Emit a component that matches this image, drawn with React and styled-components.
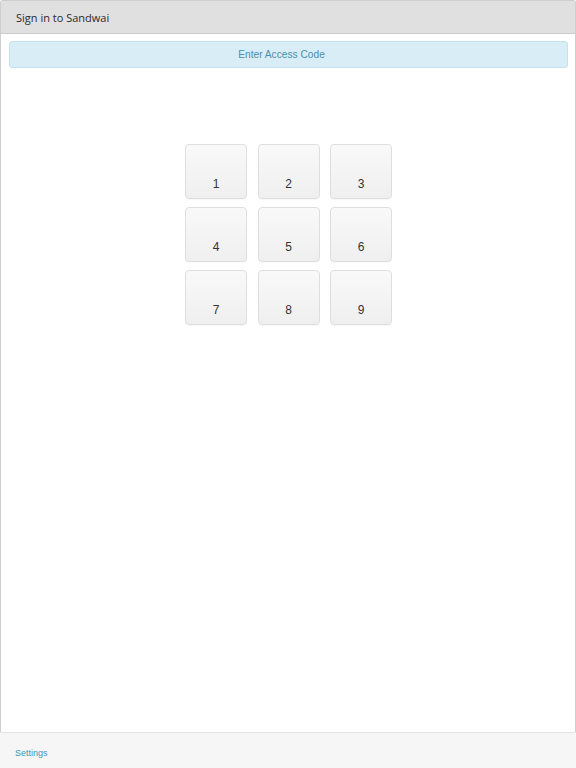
import React from "react";
import styled, { createGlobalStyle } from "styled-components";

const GlobalStyle = createGlobalStyle`
  html, body {
    margin: 0;
    padding: 0;
    background: #ffffff;
  }
  body {
    font-family: "Liberation Sans", Arial, sans-serif;
  }
`;

const Page = styled.div`
  display: flex;
  flex-direction: column;
  height: 768px;
  width: 576px;
  overflow: hidden;
`;

const Panel = styled.div`
  flex: 1;
  display: flex;
  flex-direction: column;
  border: 1px solid #cfcfcf;
  border-bottom: none;
  border-radius: 3px 3px 0 0;
`;

const Header = styled.div`
  height: 32px;
  display: flex;
  align-items: center;
  padding: 0 15px;
  background: #e0e0e0;
  border-bottom: 1px solid #cccccc;
  font-family: "Open Sans", "Noto Sans", sans-serif;
  font-size: 11px;
  color: #2b2b2b;
`;

const Body = styled.div`
  flex: 1;
  padding: 7px 7px 0 8px;
`;

const Alert = styled.div`
  height: 25px;
  display: flex;
  align-items: center;
  justify-content: center;
  padding-right: 14px;
  background: #d9edf7;
  border: 1px solid #c4e3f0;
  border-radius: 3px;
  color: #4f8fa8;
  font-size: 10.2px;
`;

const Keypad = styled.div`
  display: grid;
  grid-template-columns: repeat(3, 62px);
  grid-auto-rows: 55px;
  column-gap: 10.5px;
  row-gap: 8px;
  justify-content: center;
  margin-top: 76px;
`;

const Key = styled.button`
  display: flex;
  align-items: flex-end;
  justify-content: center;
  padding: 0 0 7px;
  background: linear-gradient(#f9f9f9, #efefef);
  border: 1px solid #dedede;
  border-radius: 4px;
  box-shadow: 0 1px 1px rgba(0, 0, 0, 0.03);
  font-family: "Liberation Sans", Arial, sans-serif;
  font-size: 12px;
  color: #333333;
  cursor: pointer;
`;

const Footer = styled.div`
  height: 35px;
  display: flex;
  align-items: center;
  padding: 0 15px;
  background: #f6f6f6;
  border-top: 1px solid #e2e2e2;
`;

const FooterLink = styled.a`
  font-size: 9px;
  color: #3b97c0;
  text-decoration: none;
  cursor: pointer;
  margin-top: 4px;
`;

const keys = ["1", "2", "3", "4", "5", "6", "7", "8", "9"];

export default function App() {
  return (
    <>
      <GlobalStyle />
      <Page>
        <Panel>
          <Header>Sign in to Sandwai</Header>
          <Body>
            <Alert>Enter Access Code</Alert>
            <Keypad>
              {keys.map((k) => (
                <Key key={k}>{k}</Key>
              ))}
            </Keypad>
          </Body>
        </Panel>
        <Footer>
          <FooterLink>Settings</FooterLink>
        </Footer>
      </Page>
    </>
  );
}
